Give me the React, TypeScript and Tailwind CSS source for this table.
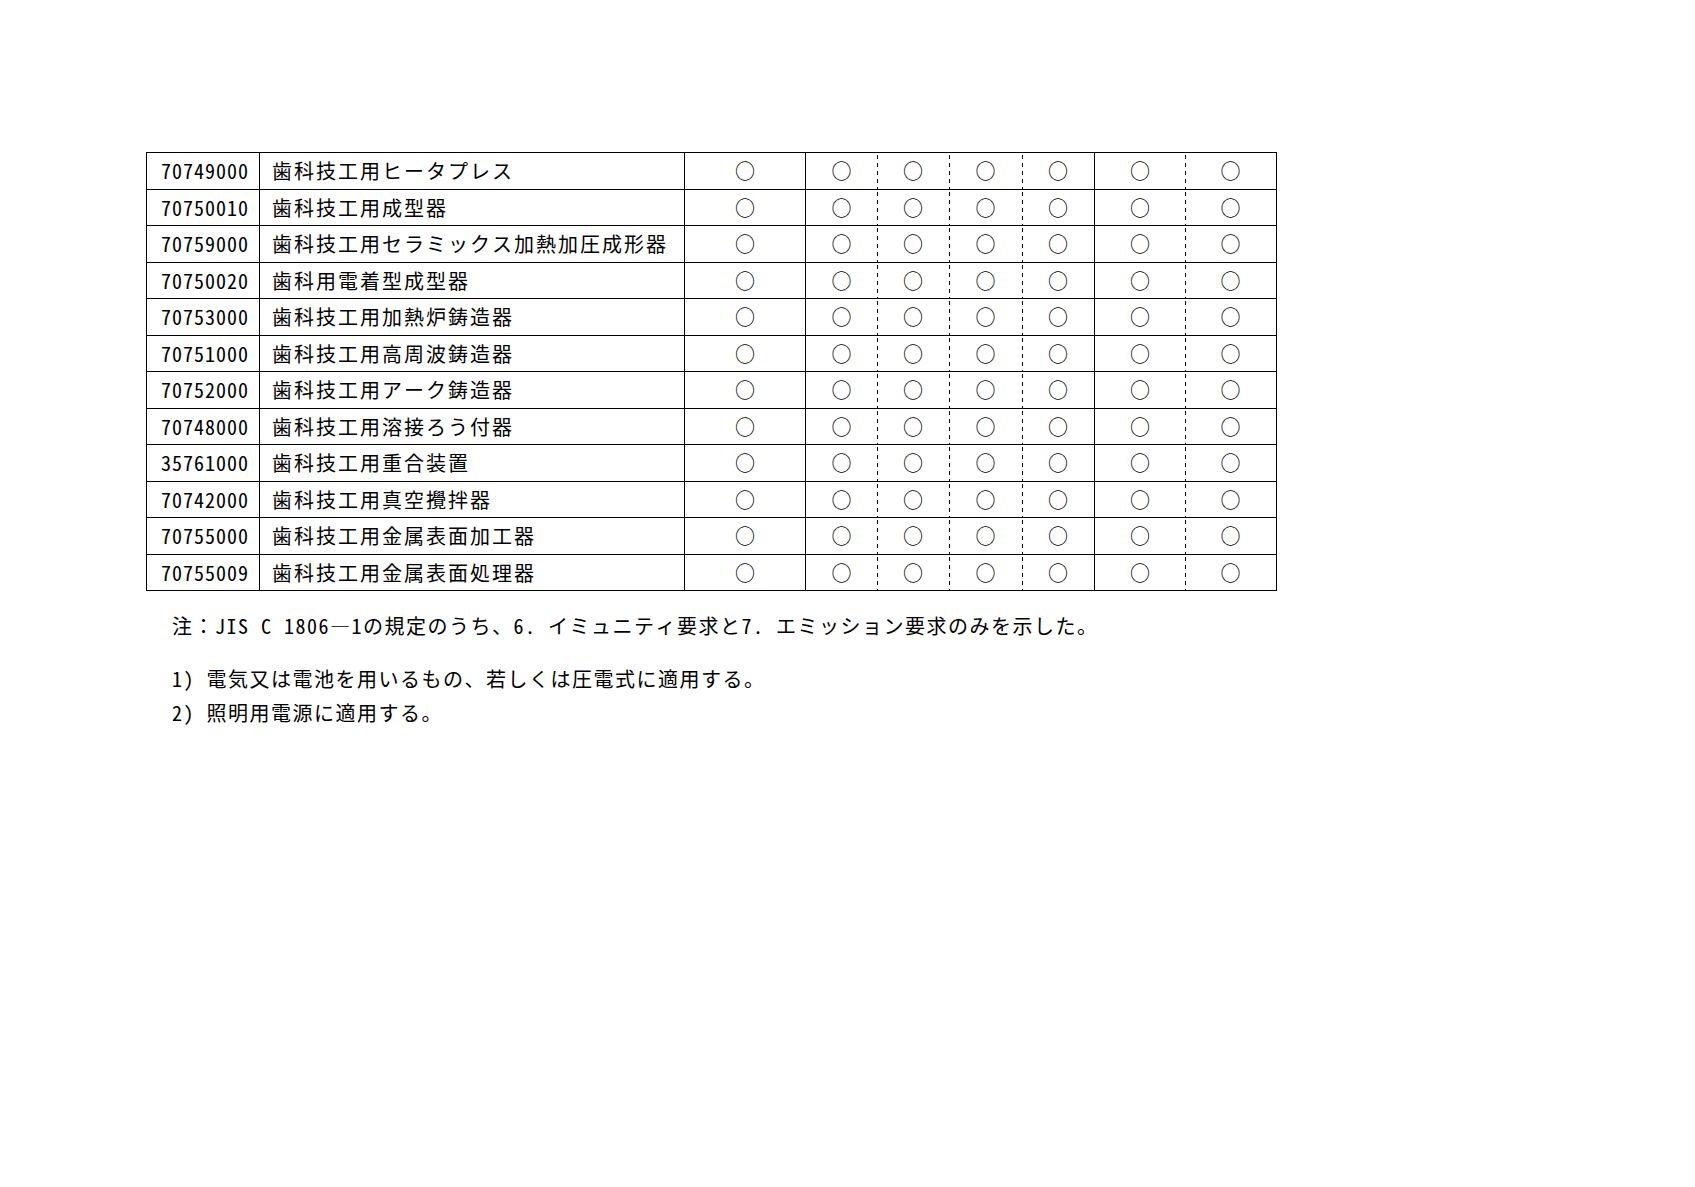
const ROWS: [string, string][] = [
  ['70749000', '歯科技工用ヒータプレス'],
  ['70750010', '歯科技工用成型器'],
  ['70759000', '歯科技工用セラミックス加熱加圧成形器'],
  ['70750020', '歯科用電着型成型器'],
  ['70753000', '歯科技工用加熱炉鋳造器'],
  ['70751000', '歯科技工用高周波鋳造器'],
  ['70752000', '歯科技工用アーク鋳造器'],
  ['70748000', '歯科技工用溶接ろう付器'],
  ['35761000', '歯科技工用重合装置'],
  ['70742000', '歯科技工用真空攪拌器'],
  ['70755000', '歯科技工用金属表面加工器'],
  ['70755009', '歯科技工用金属表面処理器'],
]

// mark columns: width + left edge style
const MARKS = [
  { w: 'w-[121px]', edge: 'solid' },
  { w: 'w-[72px]', edge: 'solid' },
  { w: 'w-[72px]', edge: 'dash' },
  { w: 'w-[73px]', edge: 'dash' },
  { w: 'w-[72px]', edge: 'dash' },
  { w: 'w-[91px]', edge: 'solid' },
  { w: 'w-[91px]', edge: 'dash' },
]

const font = "font-['Noto_Sans_Mono_CJK_JP','Noto_Sans_CJK_JP',sans-serif]"

function Mark({ w, edge }: { w: string; edge: string }) {
  const line =
    edge === 'solid'
      ? 'border-l border-black'
      : 'bg-[linear-gradient(to_bottom,transparent_2px,#000_2px,#000_6px,transparent_6px)] bg-[length:1px_8px] bg-repeat-y bg-left-top'
  return (
    <div className={`${w} ${line} flex items-center justify-center text-[20px] leading-none`}>○</div>
  )
}

export default function App() {
  return (
    <div className={`min-h-[1187px] w-[1695px] bg-white pl-[146px] pt-[152px] font-light text-black ${font}`}>
      <div className="w-[1131px] border border-black">
        {ROWS.map(([code, name], i) => (
          <div
            key={code}
            className={`flex ${i > 0 ? 'border-t border-black' : ''} ${i > 0 && i % 2 === 0 ? 'h-[37px]' : 'h-[36px]'}`}
          >
            <div className="flex w-[112px] items-center pl-[14px] text-[20px] tracking-[1px]">{code}</div>
            <div className="flex w-[425px] items-center border-l border-black pl-[12px] text-[20px] tracking-[2px]">
              {name}
            </div>
            {MARKS.map((m, j) => (
              <Mark key={j} w={m.w} edge={m.edge} />
            ))}
          </div>
        ))}
      </div>

      <div className="pl-[26px] text-[20px] tracking-[1.5px]">
        <p className="mt-[18px] leading-[34px]">
          注：JIS C 1806―1の規定のうち、6. イミュニティ要求と7. エミッション要求のみを示した。
        </p>
        <p className="mt-[19px] leading-[34px]">1) 電気又は電池を用いるもの、若しくは圧電式に適用する。</p>
        <p className="leading-[34px]">2) 照明用電源に適用する。</p>
      </div>
    </div>
  )
}
